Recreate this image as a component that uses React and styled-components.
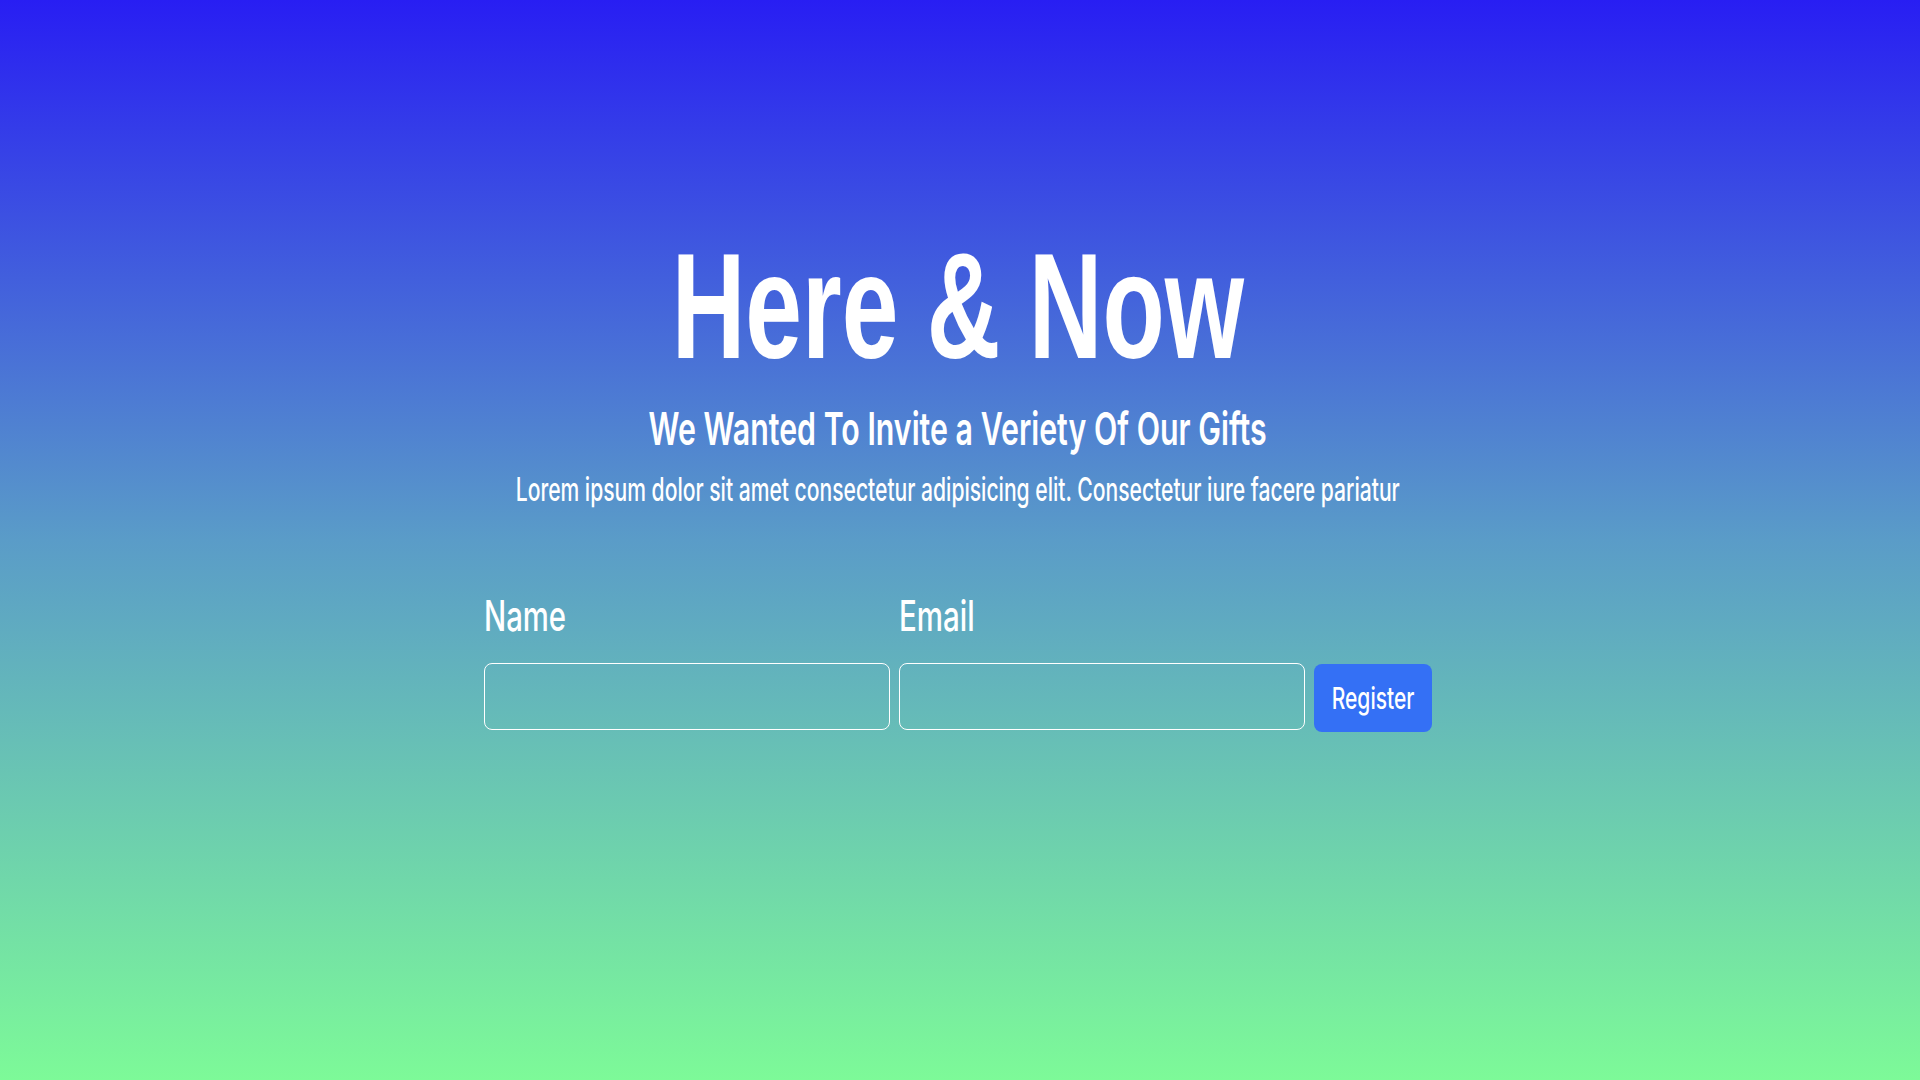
import React from "react";
import styled, { createGlobalStyle } from "styled-components";

const GlobalStyle = createGlobalStyle`
  html, body { margin: 0; padding: 0; }
  body { font-family: Inter, "Noto Sans", sans-serif; }
  * { box-sizing: border-box; }
`;

const Page = styled.div`
  min-height: 100vh;
  background: linear-gradient(to bottom, #281ef3 0%, #5a9cc8 50%, #7dfa98 100%);
  color: #fff;
`;

const Hero = styled.section`
  display: flex;
  flex-direction: column;
  align-items: center;
  padding: 231px 4px 0 0;
`;

// the text in the shot is squeezed sideways
const Squish = styled.span`
  display: inline-block;
  white-space: nowrap;
  transform: scaleX(${(p) => p.$sx || 0.7});
  transform-origin: ${(p) => p.$origin || "center"};
`;

const Title = styled.h1`
  margin: 0;
  font-family: "Liberation Sans", Arial, sans-serif;
  font-size: 150px;
  font-weight: 700;
  line-height: 1;
`;

const Subtitle = styled.h2`
  margin: 21px 0 0;
  font-size: 45px;
  font-weight: 600;
  line-height: 1.2;
`;

const Lead = styled.p`
  margin: 15px 0 0;
  font-size: 32px;
  font-weight: 500;
  line-height: 1.2;
`;

const Form = styled.form`
  display: grid;
  grid-template-columns: 406px 406px 118px;
  column-gap: 9px;
  row-gap: 21px;
  margin-top: 82px;
`;

const Label = styled.label`
  grid-row: 1;
  grid-column: ${(p) => p.$col};
  font-size: 42px;
  font-weight: 500;
  line-height: 1.2;
`;

const Input = styled.input`
  grid-row: 2;
  height: 67px;
  border: 1.5px solid #fff;
  border-radius: 8px;
  background: transparent;
  color: #fff;
  font-size: 24px;
  padding: 0 14px;
  outline: none;
`;

const Button = styled.button`
  grid-row: 2;
  align-self: start;
  height: 68px;
  margin-top: 1px;
  border: none;
  border-radius: 8px;
  background: #3470f5;
  color: #fff;
  font-family: Inter, sans-serif;
  font-size: 30px;
  font-weight: 500;
  padding: 0;
  cursor: pointer;
`;

export default function App() {
  return (
    <Page>
      <GlobalStyle />
      <Hero>
        <Title>
          <Squish $sx={0.68}>Here &amp; Now</Squish>
        </Title>
        <Subtitle>
          <Squish $sx={0.674}>We Wanted To Invite a Veriety Of Our Gifts</Squish>
        </Subtitle>
        <Lead>
          <Squish $sx={0.659}>
            Lorem ipsum dolor sit amet consectetur adipisicing elit. Consectetur iure facere pariatur
          </Squish>
        </Lead>
        <Form onSubmit={(e) => e.preventDefault()}>
          <Label $col={1} htmlFor="name">
            <Squish $sx={0.698} $origin="left">Name</Squish>
          </Label>
          <Label $col={2} htmlFor="email">
            <Squish $sx={0.703} $origin="left">Email</Squish>
          </Label>
          <Input id="name" type="text" />
          <Input id="email" type="email" />
          <Button type="submit">
            <Squish $sx={0.7}>Register</Squish>
          </Button>
        </Form>
      </Hero>
    </Page>
  );
}
